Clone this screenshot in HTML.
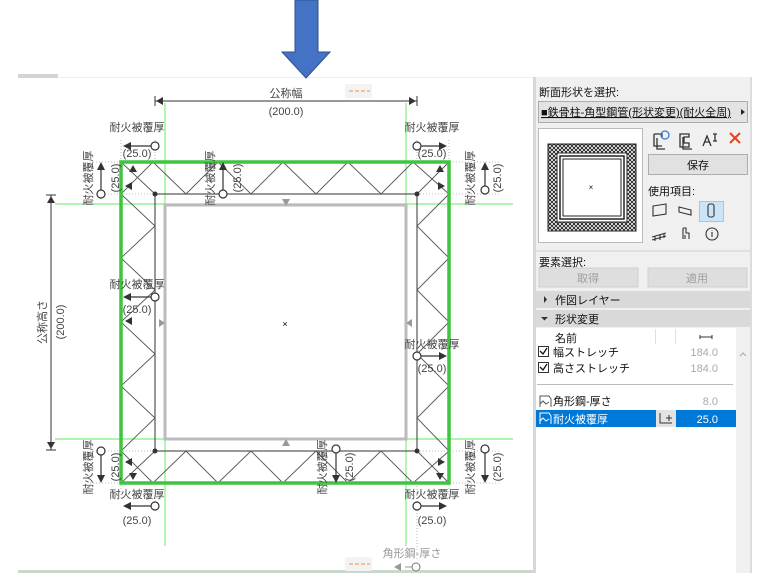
<!DOCTYPE html>
<html><head><meta charset="utf-8"><style>
html,body{margin:0;padding:0;width:762px;height:581px;overflow:hidden;background:#fff;}
svg{display:block}
text{font-family:"Liberation Sans","Noto Sans CJK JP",sans-serif;}
</style></head><body>
<svg width="762" height="581" viewBox="0 0 762 581" xmlns="http://www.w3.org/2000/svg">
<defs>
<pattern id="hx" width="4" height="4" patternUnits="userSpaceOnUse">
<rect width="4" height="4" fill="#fff"/>
<path d="M0,2 L2,0 L4,2 L2,4 Z" fill="none" stroke="#222" stroke-width="0.9"/>
</pattern>
</defs>
<!-- canvas top strip -->
<rect x="18" y="77" width="516" height="1" fill="#eeeeee"/>
<rect x="18" y="74" width="40" height="4" fill="#d4d4d4"/>
<rect x="18" y="570" width="516" height="3" fill="#c9d9c9"/>

<!-- green guides -->
<g stroke="#7ef07e" stroke-width="1.2">
<line x1="165" y1="103" x2="165" y2="546"/>
<line x1="406" y1="103" x2="406" y2="546"/>
<line x1="55" y1="204" x2="513" y2="204"/>
<line x1="55" y1="439" x2="513" y2="439"/>
</g>
<!-- dotted helpers -->
<g stroke="#aaa" stroke-width="0.8" stroke-dasharray="1,2" fill="none">
<line x1="121" y1="140" x2="121" y2="500"/><line x1="449" y1="140" x2="449" y2="500"/>
<line x1="155" y1="140" x2="155" y2="162"/><line x1="417" y1="140" x2="417" y2="162"/>
<line x1="90" y1="162" x2="500" y2="162"/><line x1="90" y1="194" x2="500" y2="194"/>
<line x1="90" y1="451" x2="500" y2="451"/><line x1="90" y1="483" x2="500" y2="483"/>
<line x1="155" y1="483" x2="155" y2="510"/><line x1="417" y1="483" x2="417" y2="560"/>
</g>
<!-- zigzag -->
<g stroke="#555" stroke-width="0.9" fill="none">
<polyline points="121,194 153,162 186,194 218,162 251,194 283,162 316,194 348,162 381,194 413,162 449,194"/>
<polyline points="121,451 153,483 186,451 218,483 251,451 283,483 316,451 348,483 381,451 413,483 449,451"/>
<polyline points="121,194 155,226 121,258 155,290 121,322 155,354 121,386 155,418 121,451"/>
<polyline points="449,194 417,226 449,258 417,290 449,322 417,354 449,386 417,418 449,451"/>
<line x1="121" y1="162" x2="155" y2="194"/><line x1="449" y1="162" x2="417" y2="194"/>
<line x1="121" y1="483" x2="155" y2="451"/><line x1="449" y1="483" x2="417" y2="451"/>
</g>
<!-- steel -->
<rect x="155" y="194" width="262" height="257" fill="none" stroke="#555" stroke-width="1.2"/>
<rect x="165" y="205" width="241" height="234" fill="none" stroke="#bbb" stroke-width="3"/>
<g fill="#333"><circle cx="155" cy="194" r="2.5"/><circle cx="417" cy="194" r="2.5"/><circle cx="155" cy="451" r="2.5"/><circle cx="417" cy="451" r="2.5"/></g>
<!-- outer green -->
<rect x="121" y="162" width="328" height="321" fill="none" stroke="#3ec43e" stroke-width="3.5"/>
<!-- small triangles -->
<g fill="#333">
<polygon points="133,165 137,172 129,172"/><polygon points="440,165 444,172 436,172"/>
<polygon points="125,186 132,182 132,190"/><polygon points="445,186 438,182 438,190"/>
<polygon points="133,480 137,473 129,473"/><polygon points="440,480 444,473 436,473"/>
<polygon points="125,462 132,458 132,466"/><polygon points="445,462 438,458 438,466"/>
<polygon points="125,321 132,317 132,325"/>
</g>
<g fill="#999">
<polygon points="286,198 290,205 282,205" transform="rotate(180 286 202)"/>
<polygon points="286,439 290,446 282,446"/>
<polygon points="165,323 159,319 159,327"/>
<polygon points="406,323 412,319 412,327"/>
</g>
<text x="285" y="327" font-size="9" text-anchor="middle" fill="#000">×</text>

<!-- dimension top -->
<g stroke="#333" stroke-width="1"><line x1="155" y1="101" x2="417" y2="101"/><line x1="155" y1="96" x2="155" y2="106"/><line x1="417" y1="96" x2="417" y2="106"/></g>
<polygon points="156,101 163,97 163,105" fill="#333"/><polygon points="416,101 409,97 409,105" fill="#333"/>
<text x="286" y="97" font-size="11" text-anchor="middle" fill="#444">公称幅</text>
<text x="286" y="115" font-size="11" text-anchor="middle" fill="#444">(200.0)</text>
<!-- dimension left -->
<g stroke="#333" stroke-width="1"><line x1="51" y1="195" x2="51" y2="450"/><line x1="46" y1="195" x2="56" y2="195"/><line x1="46" y1="450" x2="56" y2="450"/></g>
<polygon points="51,196 47,203 55,203" fill="#333"/><polygon points="51,449 47,442 55,442" fill="#333"/>
<text transform="translate(46,322) rotate(-90)" font-size="11" text-anchor="middle" fill="#444">公称高さ</text>
<text transform="translate(64,322) rotate(-90)" font-size="11" text-anchor="middle" fill="#444">(200.0)</text>

<!-- horizontal labels -->
<g font-size="11" fill="#444" text-anchor="middle">
<text x="137" y="131">耐火被覆厚</text><text x="137" y="157">(25.0)</text>
<text x="432" y="131">耐火被覆厚</text><text x="432" y="157">(25.0)</text>
<text x="137" y="288">耐火被覆厚</text><text x="137" y="313">(25.0)</text>
<text x="432" y="348">耐火被覆厚</text><text x="432" y="372">(25.0)</text>
<text x="137" y="498">耐火被覆厚</text><text x="137" y="524">(25.0)</text>
<text x="432" y="498">耐火被覆厚</text><text x="432" y="524">(25.0)</text>
</g>
<g stroke="#333" stroke-width="1.2" fill="#fff">
<line x1="125" y1="146" x2="151" y2="146"/><circle cx="155" cy="146" r="4"/>
<line x1="421" y1="146" x2="445" y2="146"/><circle cx="417" cy="146" r="4"/>
<line x1="125" y1="297" x2="151" y2="297"/><circle cx="155" cy="297" r="4"/>
<line x1="421" y1="356" x2="445" y2="356"/><circle cx="417" cy="356" r="4"/>
<line x1="125" y1="506" x2="151" y2="506"/><circle cx="155" cy="506" r="4"/>
<line x1="421" y1="506" x2="445" y2="506"/><circle cx="417" cy="506" r="4"/>
</g>
<g fill="#333">
<polygon points="123,146 131,142 131,150"/><polygon points="447,146 439,142 439,150"/>
<polygon points="123,297 131,293 131,301"/><polygon points="447,356 439,352 439,360"/>
<polygon points="123,506 131,502 131,510"/><polygon points="447,506 439,502 439,510"/>
</g>
<!-- vertical labels -->
<g font-size="11" fill="#444" text-anchor="middle">
<text transform="translate(92,178) rotate(-90)">耐火被覆厚</text><text transform="translate(119,178) rotate(-90)">(25.0)</text>
<text transform="translate(214,178) rotate(-90)">耐火被覆厚</text><text transform="translate(241,178) rotate(-90)">(25.0)</text>
<text transform="translate(474,178) rotate(-90)">耐火被覆厚</text><text transform="translate(501,178) rotate(-90)">(25.0)</text>
<text transform="translate(92,467) rotate(-90)">耐火被覆厚</text><text transform="translate(119,467) rotate(-90)">(25.0)</text>
<text transform="translate(326,467) rotate(-90)">耐火被覆厚</text><text transform="translate(353,467) rotate(-90)">(25.0)</text>
<text transform="translate(474,467) rotate(-90)">耐火被覆厚</text><text transform="translate(501,467) rotate(-90)">(25.0)</text>
</g>
<g stroke="#333" stroke-width="1.2" fill="#fff">
<line x1="101" y1="165" x2="101" y2="190"/><circle cx="101" cy="194" r="4"/>
<line x1="223" y1="165" x2="223" y2="190"/><circle cx="223" cy="194" r="4"/>
<line x1="485" y1="165" x2="485" y2="186"/><circle cx="485" cy="190" r="4"/>
<line x1="101" y1="455" x2="101" y2="480"/><circle cx="101" cy="451" r="4"/>
<line x1="336" y1="453" x2="336" y2="480"/><circle cx="336" cy="449" r="4"/>
<line x1="485" y1="453" x2="485" y2="480"/><circle cx="485" cy="449" r="4"/>
</g>
<g fill="#333">
<polygon points="101,162 97,170 105,170"/><polygon points="223,162 219,170 227,170"/><polygon points="485,162 481,170 489,170"/>
<polygon points="101,483 97,475 105,475"/><polygon points="336,483 332,475 340,475"/><polygon points="485,483 481,475 489,475"/>
</g>
<!-- 角形鋼-厚さ -->
<text x="412" y="557" font-size="11" text-anchor="middle" fill="#999">角形鋼-厚さ</text>
<polygon points="394,567 401,563 401,571" fill="#999"/>
<line x1="405" y1="567" x2="412" y2="567" stroke="#999"/><circle cx="416" cy="567" r="4" fill="#fff" stroke="#777"/>
<!-- orange boxes -->
<rect x="345" y="84" width="27" height="14" rx="2" fill="#f3f3f3"/>
<g stroke="#f5a050" stroke-width="1.2"><line x1="349" y1="91" x2="353" y2="91"/><line x1="355" y1="91" x2="359" y2="91"/><line x1="361" y1="91" x2="365" y2="91"/><line x1="367" y1="91" x2="370" y2="91"/></g>
<rect x="345" y="557" width="27" height="14" rx="2" fill="#f3f3f3"/>
<g stroke="#f5a050" stroke-width="1.2"><line x1="349" y1="564" x2="353" y2="564"/><line x1="355" y1="564" x2="359" y2="564"/><line x1="361" y1="564" x2="365" y2="564"/><line x1="367" y1="564" x2="370" y2="564"/></g>

<!-- blue arrow -->
<polygon points="295,0 318,0 318,52 330,52 306,78 282,52 295,52" fill="#4472c4" stroke="#2f528f" stroke-width="1"/>

<!-- right panel -->
<rect x="533" y="77" width="218" height="496" fill="#f0f0f0"/>
<rect x="533" y="77" width="3" height="496" fill="#d8d8d8"/>
<rect x="750" y="77" width="2" height="496" fill="#dcdcdc"/>
<g font-size="11" fill="#111">
<text x="539" y="96">断面形状を選択:</text>
<rect x="538.5" y="101.5" width="209" height="21" fill="#e3e3e3" stroke="#adadad"/>
<text x="541" y="116" font-size="11" text-decoration="underline">■鉄骨柱-角型鋼管(形状変更)(耐火全周)</text>
<polygon points="741,109 745,112 741,115" fill="#222"/>
<rect x="538.5" y="128.5" width="104" height="114" fill="#fff" stroke="#bbb"/>
<rect x="548" y="144" width="88" height="87" fill="url(#hx)" stroke="#222"/>
<rect x="557" y="153" width="70" height="69" fill="#fff" stroke="#222"/>
<rect x="560" y="156" width="64" height="63" fill="none" stroke="#222" stroke-width="1.5"/>
<rect x="563" y="159" width="58" height="57" fill="none" stroke="#222"/>
<text x="591" y="190" font-size="8" text-anchor="middle">×</text>
<!-- icons -->
<g stroke="#333" stroke-width="1.3" fill="none">
<path d="M654,134 h8 v3 M654,134 v12 h8 M657,138 v11 h8"/>
<circle cx="665" cy="135" r="4" stroke="#3a7bd5"/>
<path d="M680,134 h9 v3 h-5 v6 h5 v4 h-9 z M683,137 v12 h9"/>
<path d="M703,146 l4,-10 l4,10 M705,142 h4 M713,134 h4 M715,134 v7 M713,141 h4"/>
</g>
<path d="M730,133 l10,10 M740,133 l-10,10" stroke="#e8401c" stroke-width="2"/>
<rect x="648.5" y="154.5" width="99" height="20" fill="#e1e1e1" stroke="#adadad"/>
<text x="698" y="169" text-anchor="middle">保存</text>
<text x="648" y="195">使用項目:</text>
<rect x="699.5" y="201.5" width="24" height="20" fill="#cce4f7" stroke="#99c9ef"/>
<g stroke="#333" stroke-width="1.1" fill="none">
<path d="M653,206 l13,-2 v10 l-13,2 z"/>
<path d="M679,207 l12,3 v5 l-12,-3 z M679,207 l0,2"/>
<rect x="708" y="204" width="6" height="13" rx="2"/>
<path d="M652,237 l14,-4 M652,240 l14,-4 M655,236 v5 M660,235 v5 M664,233 v5"/>
<path d="M683,228 h3 v5 h3 v6 M683,228 v11 M685,239 v-4"/>
<circle cx="712" cy="234" r="6"/><path d="M712,232 v5 M712,230 v0.5"/>
</g>
<line x1="536" y1="251" x2="750" y2="251" stroke="#d0d0d0"/>
<text x="539" y="266">要素選択:</text>
<rect x="539" y="268" width="99" height="19" fill="#dedede" stroke="#d0d0d0"/>
<text x="588" y="282" text-anchor="middle" fill="#a0a0a0">取得</text>
<rect x="648" y="268" width="99" height="19" fill="#dedede" stroke="#d0d0d0"/>
<text x="697" y="282" text-anchor="middle" fill="#a0a0a0">適用</text>
<rect x="536" y="291" width="214" height="17" fill="#d9d9d9"/>
<polygon points="544,296 547,299.5 544,303" fill="#333"/>
<text x="555" y="304">作図レイヤー</text>
<rect x="536" y="310" width="214" height="17" fill="#d9d9d9"/>
<polygon points="541,317 548,317 544.5,320.5" fill="#333"/>
<text x="555" y="323">形状変更</text>
<rect x="536" y="328" width="200" height="245" fill="#fff"/>
<rect x="736" y="328" width="14" height="245" fill="#f0f0f0"/>
<path d="M740,356 l3,-3 l3,3" stroke="#aaa" fill="none"/>
<line x1="655.5" y1="329" x2="655.5" y2="344" stroke="#e0e0e0"/><line x1="675.5" y1="329" x2="675.5" y2="344" stroke="#e0e0e0"/>
<text x="555" y="342">名前</text>
<path d="M700,337 h12 M700,335 v4 M712,335 v4" stroke="#333" stroke-width="1"/>
<rect x="538.5" y="346.5" width="10" height="10" fill="#fff" stroke="#333"/>
<path d="M540,351 l3,3 l4,-6" stroke="#111" fill="none" stroke-width="1.3"/>
<text x="553" y="356">幅ストレッチ</text><text x="718" y="356" text-anchor="end" fill="#aaa">184.0</text>
<rect x="538.5" y="362.5" width="10" height="10" fill="#fff" stroke="#333"/>
<path d="M540,367 l3,3 l4,-6" stroke="#111" fill="none" stroke-width="1.3"/>
<text x="553" y="372">高さストレッチ</text><text x="718" y="372" text-anchor="end" fill="#aaa">184.0</text>
<line x1="537" y1="384.5" x2="733" y2="384.5" stroke="#bbb"/>
<path d="M540,407 v-11 h9 l2,3 v8 M540,404 l3,-3 l3,3 l3,-2" stroke="#555" fill="none"/>
<text x="553" y="405">角形鋼-厚さ</text><text x="718" y="405" text-anchor="end" fill="#aaa">8.0</text>
<rect x="536" y="410" width="200" height="17" fill="#0078d7"/>
<path d="M540,424 v-11 h9 l2,3 v8 M540,421 l3,-3 l3,3 l3,-2" stroke="#fff" fill="none"/>
<text x="553" y="423" fill="#fff">耐火被覆厚</text>
<rect x="656" y="410" width="20" height="17" fill="#e3e3e3"/>
<path d="M660,413 v10 h12 M666,418 h6 M669,415 v6" stroke="#333" fill="none"/>
<text x="718" y="423" text-anchor="end" fill="#fff">25.0</text>
</g>
</svg>
</body></html>
